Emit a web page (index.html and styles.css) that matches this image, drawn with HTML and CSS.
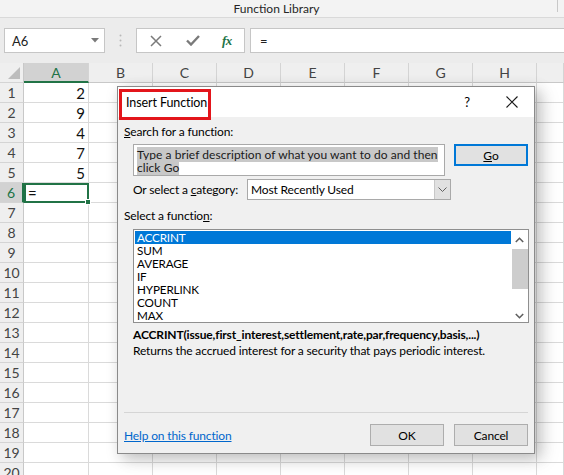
FILE: index.html
```html
<!DOCTYPE html>
<html>
<head>
<meta charset="utf-8">
<link rel="stylesheet" href="styles.css">
</head>
<body>
<div class="ribbon"><span class="ribbon-label">Function Library</span><span class="ribbon-sep"></span></div>
<div class="fbar">
  <div class="namebox"><span>A6</span><svg width="8" height="5" viewBox="0 0 8 5"><path d="M0 0H8L4 4.5Z" fill="#7a7a7a"/></svg></div>
  <div class="vdots"><svg width="3" height="13" viewBox="0 0 3 13"><circle cx="1.5" cy="1.5" r="1" fill="#b8b8b8"/><circle cx="1.5" cy="6.5" r="1" fill="#b8b8b8"/><circle cx="1.5" cy="11.5" r="1" fill="#b8b8b8"/></svg></div>
  <div class="fbtns">
    <svg class="ic-x" width="12" height="12" viewBox="0 0 12 12"><path d="M1 1L11 11M11 1L1 11" stroke="#7a7a7a" stroke-width="1.5" fill="none"/></svg>
    <svg class="ic-ok" width="14" height="11" viewBox="0 0 14 11"><path d="M1 5.5L5 9.5L13 1" stroke="#7a7a7a" stroke-width="2.4" fill="none"/></svg>
    <span class="ic-fx">fx</span>
  </div>
  <div class="finput">=</div>
</div>
<div class="sheet">
  <div class="row hdr"><div class="rh corner"><svg width="12" height="12" viewBox="0 0 12 12"><path d="M12 0V12H0Z" fill="#bdbdbd"/></svg></div><div class="ch sel colA">A</div><div class="ch">B</div><div class="ch">C</div><div class="ch">D</div><div class="ch">E</div><div class="ch">F</div><div class="ch">G</div><div class="ch">H</div><div class="ch last"></div></div>
  <div class="row"><div class="rh">1</div><div class="c colA num">2</div><div class="c"></div><div class="c"></div><div class="c"></div><div class="c"></div><div class="c"></div><div class="c"></div><div class="c"></div><div class="c last"></div></div>
  <div class="row"><div class="rh">2</div><div class="c colA num">9</div><div class="c"></div><div class="c"></div><div class="c"></div><div class="c"></div><div class="c"></div><div class="c"></div><div class="c"></div><div class="c last"></div></div>
  <div class="row"><div class="rh">3</div><div class="c colA num">4</div><div class="c"></div><div class="c"></div><div class="c"></div><div class="c"></div><div class="c"></div><div class="c"></div><div class="c"></div><div class="c last"></div></div>
  <div class="row"><div class="rh">4</div><div class="c colA num">7</div><div class="c"></div><div class="c"></div><div class="c"></div><div class="c"></div><div class="c"></div><div class="c"></div><div class="c"></div><div class="c last"></div></div>
  <div class="row"><div class="rh">5</div><div class="c colA num">5</div><div class="c"></div><div class="c"></div><div class="c"></div><div class="c"></div><div class="c"></div><div class="c"></div><div class="c"></div><div class="c last"></div></div>
  <div class="row"><div class="rh sel">6</div><div class="c colA active">=<span class="handle"></span></div><div class="c"></div><div class="c"></div><div class="c"></div><div class="c"></div><div class="c"></div><div class="c"></div><div class="c"></div><div class="c last"></div></div>
  <div class="row"><div class="rh">7</div><div class="c colA"></div><div class="c"></div><div class="c"></div><div class="c"></div><div class="c"></div><div class="c"></div><div class="c"></div><div class="c"></div><div class="c last"></div></div>
  <div class="row"><div class="rh">8</div><div class="c colA"></div><div class="c"></div><div class="c"></div><div class="c"></div><div class="c"></div><div class="c"></div><div class="c"></div><div class="c"></div><div class="c last"></div></div>
  <div class="row"><div class="rh">9</div><div class="c colA"></div><div class="c"></div><div class="c"></div><div class="c"></div><div class="c"></div><div class="c"></div><div class="c"></div><div class="c"></div><div class="c last"></div></div>
  <div class="row"><div class="rh">10</div><div class="c colA"></div><div class="c"></div><div class="c"></div><div class="c"></div><div class="c"></div><div class="c"></div><div class="c"></div><div class="c"></div><div class="c last"></div></div>
  <div class="row"><div class="rh">11</div><div class="c colA"></div><div class="c"></div><div class="c"></div><div class="c"></div><div class="c"></div><div class="c"></div><div class="c"></div><div class="c"></div><div class="c last"></div></div>
  <div class="row"><div class="rh">12</div><div class="c colA"></div><div class="c"></div><div class="c"></div><div class="c"></div><div class="c"></div><div class="c"></div><div class="c"></div><div class="c"></div><div class="c last"></div></div>
  <div class="row"><div class="rh">13</div><div class="c colA"></div><div class="c"></div><div class="c"></div><div class="c"></div><div class="c"></div><div class="c"></div><div class="c"></div><div class="c"></div><div class="c last"></div></div>
  <div class="row"><div class="rh">14</div><div class="c colA"></div><div class="c"></div><div class="c"></div><div class="c"></div><div class="c"></div><div class="c"></div><div class="c"></div><div class="c"></div><div class="c last"></div></div>
  <div class="row"><div class="rh">15</div><div class="c colA"></div><div class="c"></div><div class="c"></div><div class="c"></div><div class="c"></div><div class="c"></div><div class="c"></div><div class="c"></div><div class="c last"></div></div>
  <div class="row"><div class="rh">16</div><div class="c colA"></div><div class="c"></div><div class="c"></div><div class="c"></div><div class="c"></div><div class="c"></div><div class="c"></div><div class="c"></div><div class="c last"></div></div>
  <div class="row"><div class="rh">17</div><div class="c colA"></div><div class="c"></div><div class="c"></div><div class="c"></div><div class="c"></div><div class="c"></div><div class="c"></div><div class="c"></div><div class="c last"></div></div>
  <div class="row"><div class="rh">18</div><div class="c colA"></div><div class="c"></div><div class="c"></div><div class="c"></div><div class="c"></div><div class="c"></div><div class="c"></div><div class="c"></div><div class="c last"></div></div>
  <div class="row"><div class="rh">19</div><div class="c colA"></div><div class="c"></div><div class="c"></div><div class="c"></div><div class="c"></div><div class="c"></div><div class="c"></div><div class="c"></div><div class="c last"></div></div>
  <div class="row"><div class="rh">20</div><div class="c colA"></div><div class="c"></div><div class="c"></div><div class="c"></div><div class="c"></div><div class="c"></div><div class="c"></div><div class="c"></div><div class="c last"></div></div>
</div>

<div class="dialog">
  <div class="dlg-title">
    <span class="dlg-title-text">Insert Function</span>
    <span class="dlg-help">?</span>
    <span class="dlg-close"><svg width="12" height="12" viewBox="0 0 12 12"><path d="M0.5 0.5L11.5 11.5M11.5 0.5L0.5 11.5" stroke="#1a1a1a" stroke-width="1.1" fill="none"/></svg></span>
    <span class="redbox"></span>
  </div>
  <div class="dlg-body">
    <div class="lbl lbl-search"><u>S</u>earch for a function:</div>
    <div class="search-row">
      <div class="search-box"><span class="hl">Type a brief description of what you want to do and then</span><br><span class="hl">click Go</span></div>
      <div class="btn btn-go"><u>G</u>o</div>
    </div>
    <div class="cat-row">
      <span class="lbl">Or select a <u>c</u>ategory:</span>
      <div class="select"><span class="select-text">Most Recently Used</span><span class="select-btn"><svg width="9" height="5" viewBox="0 0 9 5"><path d="M0.5 0.5L4.5 4.5L8.5 0.5" stroke="#606060" stroke-width="1" fill="none"/></svg></span></div>
    </div>
    <div class="lbl lbl-select">Select a functio<u>n</u>:</div>
    <div class="listbox">
      <div class="items">
        <div class="item selected">ACCRINT</div>
        <div class="item">SUM</div>
        <div class="item">AVERAGE</div>
        <div class="item">IF</div>
        <div class="item">HYPERLINK</div>
        <div class="item">COUNT</div>
        <div class="item">MAX</div>
      </div>
      <div class="vscroll">
        <svg class="arr" width="9" height="6" viewBox="0 0 9 6"><path d="M0.8 5L4.5 1.3L8.2 5" stroke="#606060" stroke-width="1.6" fill="none"/></svg>
        <div class="thumb"></div>
        <div class="track"></div>
        <svg class="arr" width="9" height="6" viewBox="0 0 9 6"><path d="M0.8 1L4.5 4.7L8.2 1" stroke="#606060" stroke-width="1.6" fill="none"/></svg>
      </div>
    </div>
    <div class="desc">
      <div class="desc-sig">ACCRINT(issue,first_interest,settlement,rate,par,frequency,basis,...)</div>
      <div class="desc-text">Returns the accrued interest for a security that pays periodic interest.</div>
    </div>
    <div class="spacer"></div>
    <div class="sep"></div>
    <div class="footer">
      <a class="help-link">Help on this function</a>
      <div class="btn btn-ok">OK</div>
      <div class="btn btn-cancel">Cancel</div>
    </div>
  </div>
</div>
</body>
</html>
```
FILE: styles.css
```css
* { box-sizing: border-box; }
html, body { margin: 0; padding: 0; }
body {
  width: 564px;
  height: 475px;
  overflow: hidden;
  position: relative;
  background: #ffffff;
  font-family: "Lato", "Noto Sans", sans-serif;
  color: #000;
}

/* Ribbon label strip */
.ribbon {
  height: 18px;
  background: #f3f3f3;
  border-bottom: 1px solid #d9d9d9;
  display: flex;
  align-items: center;
  font-size: 12px;
  color: #262626;
}
.ribbon-label { flex: 1; text-align: center; padding-right: 4px; }
.ribbon-sep { width: 1px; height: 12px; background: #c8c8c8; margin-right: 6px; align-self: flex-start; }

/* Formula bar */
.fbar {
  height: 45px;
  background: #ececec;
  display: flex;
  align-items: flex-start;
  padding-top: 10px;
}
.namebox {
  margin-left: 4px;
  width: 101px;
  height: 25px;
  background: #fff;
  border: 1px solid #c6c6c6;
  display: flex;
  align-items: center;
  justify-content: space-between;
  padding: 0 5px 0 7px;
  font-size: 13px;
  color: #222;
}
.vdots { width: 31px; height: 25px; display: flex; align-items: center; justify-content: center; }
.fbtns {
  width: 109px;
  height: 25px;
  background: #fff;
  border: 1px solid #c6c6c6;
  display: flex;
  align-items: center;
  padding-left: 13px;
}
.ic-x { margin-right: 24px; }
.ic-ok { margin-right: 22px; }
.ic-fx {
  font-family: "Liberation Serif", serif;
  font-style: italic;
  font-weight: bold;
  color: #217346;
  font-size: 13px;
  letter-spacing: -0.5px;
}
.finput {
  margin-left: 5px;
  flex: 1;
  height: 25px;
  background: #fff;
  border: 1px solid #c6c6c6;
  border-right: none;
  display: flex;
  align-items: center;
  padding-left: 9px;
  font-size: 13px;
  color: #222;
}

/* Sheet */
.sheet { display: flex; flex-direction: column; }
.row { display: flex; height: 20px; }
.rh {
  width: 24px;
  flex: none;
  background: #efefef;
  border-right: 1px solid #c8c8c8;
  border-bottom: 1px solid #d4d4d4;
  font-size: 14px;
  color: #444;
  display: flex;
  align-items: center;
  justify-content: center;
}
.rh.sel { background: #d2d2d2; color: #217346; border-right: 2px solid #217346; }
.rh.corner { align-items: flex-end; justify-content: flex-end; padding: 0 3px 3px 0; }
.ch {
  width: 64px;
  flex: none;
  background: #efefef;
  border-right: 1px solid #d4d4d4;
  border-bottom: 1px solid #c8c8c8;
  font-size: 14px;
  color: #444;
  display: flex;
  align-items: center;
  justify-content: center;
}
.ch.sel { background: #d2d2d2; color: #217346; border-bottom: 2px solid #217346; }
.hdr .ch.colA { width: 65px; }
.c {
  width: 64px;
  flex: none;
  border-right: 1px solid #dadada;
  border-bottom: 1px solid #dadada;
  font-size: 15px;
  color: #111;
  display: flex;
  align-items: center;
  padding: 0 3px;
}
.c.colA { width: 65px; }
.c.num { justify-content: flex-end; padding-right: 3px; }
.c.last, .ch.last { flex: 1; }
.c.active {
  position: relative;
  border: 2px solid #217346;
  padding-left: 2px;
}
.handle {
  position: absolute;
  right: -4px;
  bottom: -4px;
  width: 6px;
  height: 6px;
  background: #217346;
  border: 1px solid #fff;
}

/* Dialog */
.dialog {
  position: absolute;
  left: 117px;
  top: 86px;
  width: 418px;
  height: 368px;
  background: #f0f0f0;
  border: 1px solid #8a8a8a;
  box-shadow: 4px 4px 14px rgba(0, 0, 0, 0.22), 10px 6px 18px rgba(0, 0, 0, 0.08);
  display: flex;
  flex-direction: column;
  font-size: 12px;
  letter-spacing: -0.15px;
  color: #000;
}
.dlg-title {
  position: relative;
  height: 30px;
  background: #fff;
  display: flex;
  align-items: center;
  padding-left: 8px;
  padding-right: 7px;
}
.dlg-title-text { flex: 1; font-size: 12.5px; letter-spacing: -0.1px; }
.dlg-help { width: 30px; text-align: center; font-size: 13px; margin-right: 15px; }
.dlg-close { width: 30px; height: 16px; display: flex; align-items: center; justify-content: center; }
.redbox {
  position: absolute;
  left: 1px;
  top: 2px;
  width: 92px;
  height: 31px;
  border: 3px solid #e3151b;
}
.dlg-body {
  flex: 1;
  display: flex;
  flex-direction: column;
  padding: 0 6px 0 6px;
}
.lbl { line-height: 15px; white-space: nowrap; }
.lbl-search { margin-top: 7px; }
.search-row { display: flex; align-items: flex-start; margin-top: 5px; padding-left: 9px; }
.search-box {
  width: 312px;
  height: 32px;
  background: #fff;
  border: 1px solid #a9a9a9;
  padding: 3px 0 0 3px;
  line-height: 13px;
  white-space: nowrap;
  color: #1a1a1a;
  letter-spacing: 0.05px;
}
.hl { background: #c8c8c8; }
.btn {
  background: #e1e1e1;
  border: 1px solid #adadad;
  height: 22px;
  width: 74px;
  display: flex;
  align-items: center;
  justify-content: center;
}
.btn-go { margin-left: 9px; border: 2px solid #0078d7; }
.cat-row { display: flex; align-items: center; margin-top: 3px; padding-left: 9px; }
.select {
  margin-left: auto;
  margin-right: 77px;
  width: 204px;
  height: 21px;
  background: #fff;
  border: 1px solid #a9a9a9;
  display: flex;
  align-items: stretch;
}
.select-text { flex: 1; padding-left: 3px; display: flex; align-items: center; }
.select-btn {
  width: 16px;
  background: #e1e1e1;
  border-left: 1px solid #c8c8c8;
  display: flex;
  align-items: center;
  justify-content: center;
}
.lbl-select { margin-top: 8px; }
.listbox {
  margin-top: 6px;
  margin-left: 9px;
  width: 396px;
  height: 94px;
  background: #fff;
  border: 1px solid #8f8f8f;
  display: flex;
  padding: 1px 0 0 1px;
}
.items { flex: 1; }
.item { height: 13px; line-height: 13px; padding-left: 2px; font-size: 11.7px; }
.item.selected { background: #0078d7; color: #fff; }
.vscroll {
  width: 17px;
  display: flex;
  flex-direction: column;
  align-items: center;
  padding-top: 6px;
  padding-bottom: 3px;
}
.thumb { width: 16px; height: 40px; background: #cdcdcd; margin-top: 6px; }
.track { flex: 1; }
.desc { margin-top: 4px; padding-left: 9px; }
.desc-sig { font-weight: bold; line-height: 16px; }
.desc-text { line-height: 16px; }
.spacer { flex: 1; }
.sep { height: 1px; background: #d5d5d5; }
.footer { display: flex; align-items: center; height: 40px; padding-top: 11px; padding-bottom: 7px; }
.help-link { color: #0066cc; text-decoration: underline; flex: 1; }
.btn-ok { margin-right: 10px; }
```
